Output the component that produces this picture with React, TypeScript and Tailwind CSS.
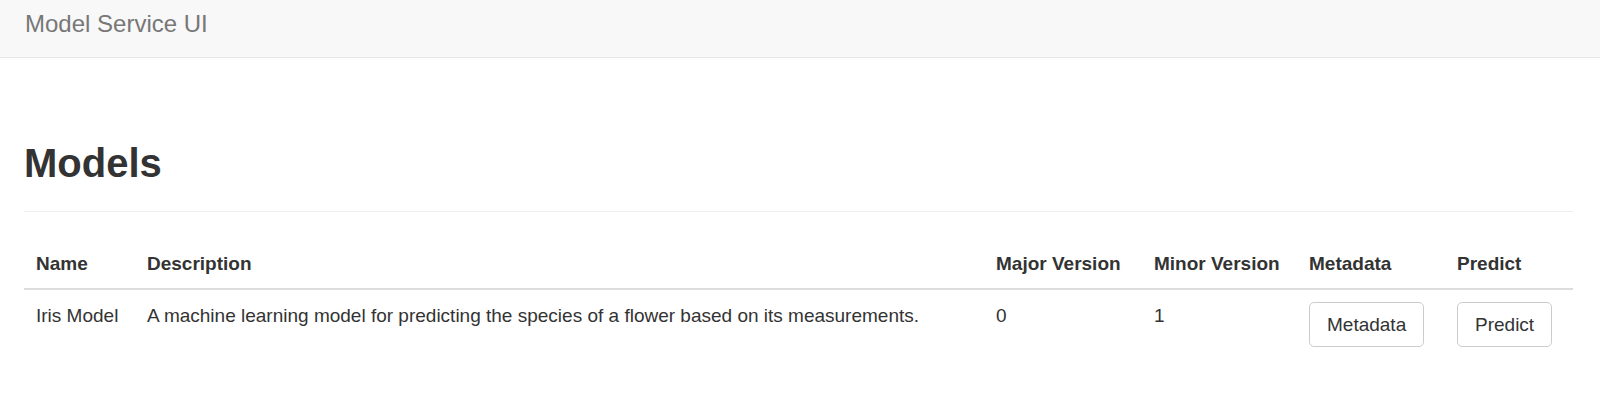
const models = [
  {
    name: "Iris Model",
    description:
      "A machine learning model for predicting the species of a flower based on its measurements.",
    major: 0,
    minor: 1,
  },
];

function Button({ label }: { label: string }) {
  return (
    <button
      type="button"
      className="h-[45px] rounded-[5px] border border-[#cccccc] bg-white px-[17px] text-[19px] leading-[27px] text-[#333333]"
    >
      {label}
    </button>
  );
}

export default function App() {
  return (
    <div className="min-h-screen bg-white font-['Liberation_Sans',Arial,sans-serif] text-[#333333]">
      <nav className="h-[58px] border-b border-[#e7e7e7] bg-[#f8f8f8] pl-[25px] pt-[12px]">
        <span className="text-[24px] leading-[24px] text-[#777777]">Model Service UI</span>
      </nav>

      <main className="pl-[24px] pr-[27px]">
        <div className="mt-[83px] border-b border-[#eeeeee] pb-[26px]">
          <h1 className="text-[40px] font-bold leading-[44px] text-[#333333]">Models</h1>
        </div>

        <table className="mt-[27px] w-full table-fixed border-collapse text-left text-[19px] leading-[27px]">
          <colgroup>
            <col className="w-[111px]" />
            <col className="w-[849px]" />
            <col className="w-[158px]" />
            <col className="w-[155px]" />
            <col className="w-[148px]" />
            <col className="w-[128px]" />
          </colgroup>
          <thead>
            <tr className="border-b-2 border-[#dddddd]">
              <th className="px-[12px] py-[11px] align-bottom font-bold">Name</th>
              <th className="px-[12px] py-[11px] align-bottom font-bold">Description</th>
              <th className="px-[12px] py-[11px] align-bottom font-bold">Major Version</th>
              <th className="px-[12px] py-[11px] align-bottom font-bold">Minor Version</th>
              <th className="px-[12px] py-[11px] align-bottom font-bold">Metadata</th>
              <th className="px-[12px] py-[11px] align-bottom font-bold">Predict</th>
            </tr>
          </thead>
          <tbody>
            {models.map((m) => (
              <tr key={m.name}>
                <td className="px-[12px] pt-[12px] pb-[11px] align-top">{m.name}</td>
                <td className="px-[12px] pt-[12px] pb-[11px] align-top">{m.description}</td>
                <td className="px-[12px] pt-[12px] pb-[11px] align-top">{m.major}</td>
                <td className="px-[12px] pt-[12px] pb-[11px] align-top">{m.minor}</td>
                <td className="px-[12px] pt-[12px] pb-[11px] align-top">
                  <Button label="Metadata" />
                </td>
                <td className="px-[12px] pt-[12px] pb-[11px] align-top">
                  <Button label="Predict" />
                </td>
              </tr>
            ))}
          </tbody>
        </table>
      </main>
    </div>
  );
}
